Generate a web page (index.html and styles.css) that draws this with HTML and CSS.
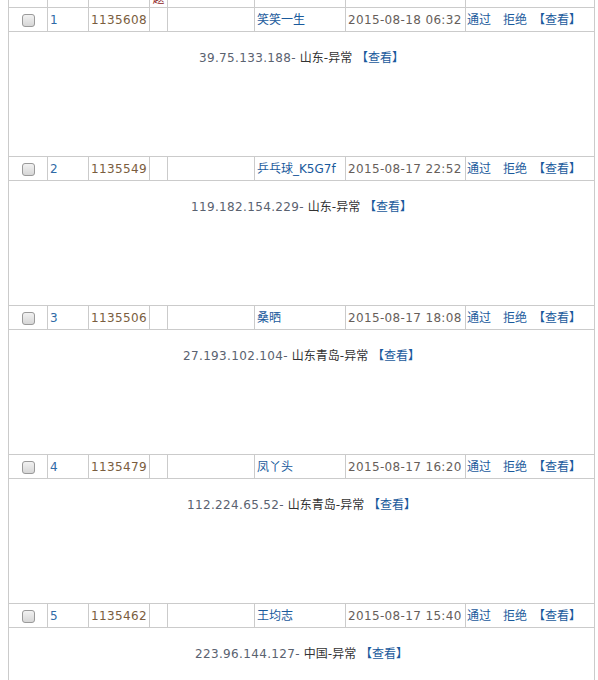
FILE: index.html
```html
<!DOCTYPE html>
<html lang="zh-CN">
<head>
<meta charset="UTF-8">
<title>审核列表</title>
<link rel="stylesheet" href="styles.css">
</head>
<body>
<table class="list">
  <colgroup>
    <col class="c-check"><col class="c-num"><col class="c-id"><col class="c-flag"><col class="c-blank"><col class="c-name"><col class="c-date"><col class="c-ops">
  </colgroup>
  <thead>
    <tr class="head">
      <th></th><th></th><th></th><th class="flag-head">问题</th><th></th><th></th><th></th><th></th>
    </tr>
  </thead>
  <tbody>
    <tr class="data">
      <td class="check"><input type="checkbox"></td>
      <td class="num">1</td>
      <td class="id">1135608</td>
      <td></td><td></td>
      <td class="name"><a href="#">笑笑一生</a></td>
      <td class="date">2015-08-18 06:32</td>
      <td class="ops"><a href="#">通过</a><a href="#">拒绝</a><a href="#">【查看】</a></td>
    </tr>
    <tr class="detail"><td colspan="8"><span class="ip">39.75.133.188-</span> 山东-异常 <a href="#">【查看】</a></td></tr>

    <tr class="data">
      <td class="check"><input type="checkbox"></td>
      <td class="num">2</td>
      <td class="id">1135549</td>
      <td></td><td></td>
      <td class="name"><a href="#">乒乓球_K5G7f</a></td>
      <td class="date">2015-08-17 22:52</td>
      <td class="ops"><a href="#">通过</a><a href="#">拒绝</a><a href="#">【查看】</a></td>
    </tr>
    <tr class="detail"><td colspan="8"><span class="ip">119.182.154.229-</span> 山东-异常 <a href="#">【查看】</a></td></tr>

    <tr class="data">
      <td class="check"><input type="checkbox"></td>
      <td class="num">3</td>
      <td class="id">1135506</td>
      <td></td><td></td>
      <td class="name"><a href="#">桑晒</a></td>
      <td class="date">2015-08-17 18:08</td>
      <td class="ops"><a href="#">通过</a><a href="#">拒绝</a><a href="#">【查看】</a></td>
    </tr>
    <tr class="detail"><td colspan="8"><span class="ip">27.193.102.104-</span> 山东青岛-异常 <a href="#">【查看】</a></td></tr>

    <tr class="data">
      <td class="check"><input type="checkbox"></td>
      <td class="num">4</td>
      <td class="id">1135479</td>
      <td></td><td></td>
      <td class="name"><a href="#">凤丫头</a></td>
      <td class="date">2015-08-17 16:20</td>
      <td class="ops"><a href="#">通过</a><a href="#">拒绝</a><a href="#">【查看】</a></td>
    </tr>
    <tr class="detail"><td colspan="8"><span class="ip">112.224.65.52-</span> 山东青岛-异常 <a href="#">【查看】</a></td></tr>

    <tr class="data">
      <td class="check"><input type="checkbox"></td>
      <td class="num">5</td>
      <td class="id">1135462</td>
      <td></td><td></td>
      <td class="name"><a href="#">王均志</a></td>
      <td class="date">2015-08-17 15:40</td>
      <td class="ops"><a href="#">通过</a><a href="#">拒绝</a><a href="#">【查看】</a></td>
    </tr>
    <tr class="detail"><td colspan="8"><span class="ip">223.96.144.127-</span> 中国-异常 <a href="#">【查看】</a></td></tr>
  </tbody>
</table>
</body>
</html>
```

FILE: styles.css
```css
body {
  margin: 0;
  background: #ffffff;
  font-family: "DejaVu Sans", Verdana, "Noto Sans CJK SC", sans-serif;
  font-size: 12px;
  color: #555;
  overflow: hidden;
}

a {
  color: #1a5a9c;
  text-decoration: none;
}

.list {
  margin: -33px 0 0 8px;
  width: 586px;
  border-collapse: collapse;
  table-layout: fixed;
}

.c-check { width: 39px; }
.c-num { width: 41px; }
.c-id { width: 61px; }
.c-flag { width: 18px; }
.c-blank { width: 87px; }
.c-name { width: 91px; }
.c-date { width: 120px; }
.c-ops { width: 129px; }

.list th,
.list td {
  border: 1px solid #cbcbcb;
  padding: 0 2px;
  white-space: nowrap;
  overflow: hidden;
}

.head th {
  height: 39px;
  vertical-align: bottom;
  font-weight: normal;
}

.flag-head {
  white-space: normal !important;
  color: #8b1a1a;
  font-size: 12px;
  line-height: 15px;
  padding: 0 !important;
  text-align: center;
}

.data td {
  height: 23px;
  line-height: 16px;
  padding-top: 0;
  padding-bottom: 0;
}

.check {
  text-align: center;
}

.check input {
  appearance: none;
  -webkit-appearance: none;
  box-sizing: border-box;
  margin: 0;
  width: 13px;
  height: 13px;
  vertical-align: middle;
  border: 1px solid #9a9a9a;
  border-radius: 3px;
  background: linear-gradient(#f2f2f2, #d6d6d6);
}

.num {
  color: #2f6aa6;
}

.id {
  color: #7a5d3e;
  letter-spacing: 0.35px;
}

.date {
  color: #665e5a;
  letter-spacing: 0.35px;
}

.list .ops {
  padding-left: 1px;
}

.ops a:first-child {
  margin-right: 12px;
}

.ops a:nth-child(2) {
  margin-right: 6px;
}

.detail td {
  height: 106px;
  padding: 18px 0 0;
  vertical-align: top;
  text-align: center;
  color: #333;
  line-height: 16px;
}

.ip {
  color: #5a6270;
  letter-spacing: 0.35px;
}
```
